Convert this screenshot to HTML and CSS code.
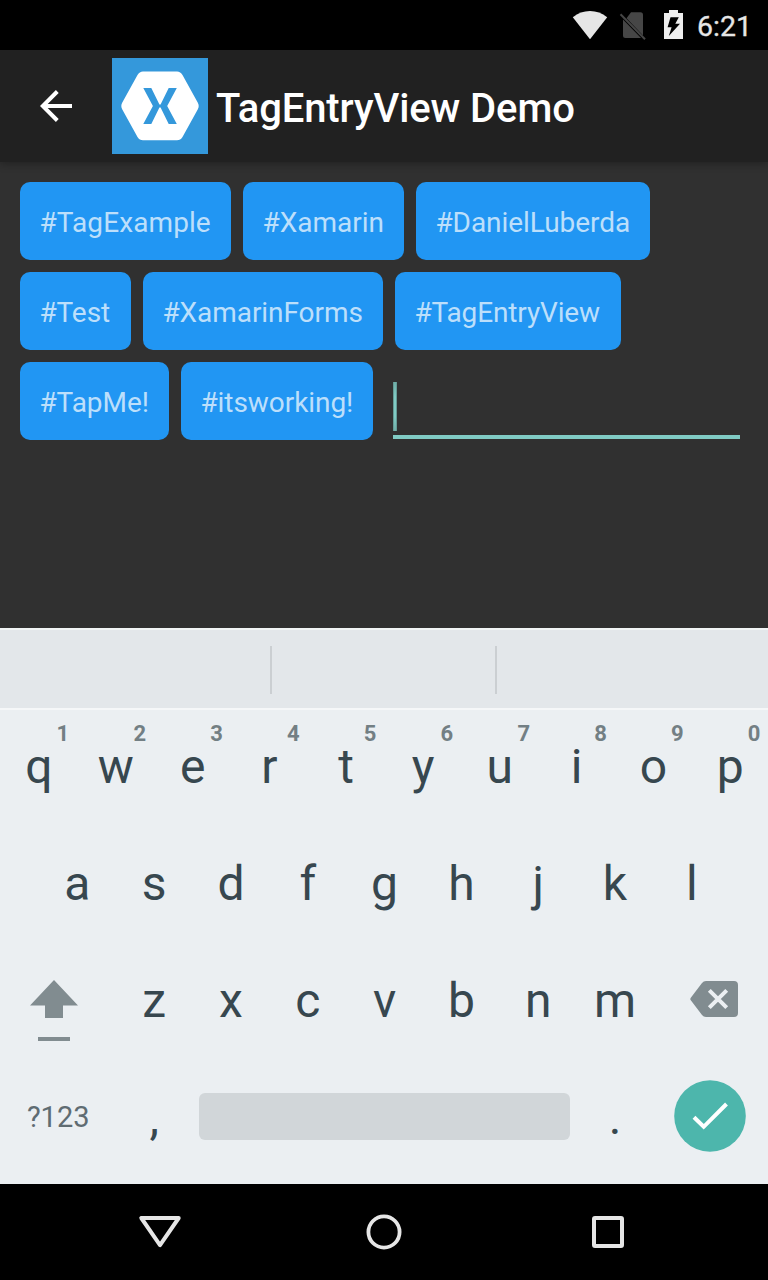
FILE: index.html
```html
<!DOCTYPE html>
<html lang="en">
<head>
<meta charset="utf-8">
<title>TagEntryView Demo</title>
<link rel="stylesheet" href="styles.css">
</head>
<body>
<div class="phone">
  <header class="status">
    <svg class="status-icons" width="128" height="50" viewBox="568 0 128 50">
      <path fill="#e6e6e6" d="M572.8 17.2Q580.500 11 590 11T607.200 17.200L590 39.200Z"/>
      <path fill="#464646" d="M631 12.300H640.500Q643 12.300 643 14.800V35.500L626.500 18.200ZM623 19.500L641 38H625.500Q623 38 623 35.500Z"/>
      <path stroke="#464646" stroke-width="2" d="M620.500 14.300L645 39.200"/>
      <path fill="#eee" d="M664 13H669V10H678V13H683V39H664Z"/>
      <path fill="#000" d="M670.500 17.300H678.800L675.300 23.700H680L668.800 36L671.600 27.200H667.600Z"/>
    </svg>
    <span class="clock">6:21</span>
  </header>

  <div class="appbar">
    <svg class="back" width="32" height="32" viewBox="0 0 32 32">
      <path fill="none" stroke="#fff" stroke-width="4" d="M32 16H3M17.300 1.500L2.800 16L17.300 30.500"/>
    </svg>
    <svg class="logo" width="96" height="96" viewBox="0 0 96 96">
      <rect width="96" height="96" fill="#3498db"/>
      <path fill="#fff" d="M31 13.500H65Q68.500 13.500 70.500 17L85.700 44.500Q87.700 48 85.700 51.500L70.500 79Q68.500 82.300 65 82.300H31Q27.500 82.300 25.500 79L10.300 51.500Q8.300 48 10.300 44.500L25.500 17Q27.500 13.500 31 13.500Z"/>
      <path fill="#3498db" d="M31.300 30H39.300L47.300 46.300Q48 47.200 48.700 46.300L56.700 30H64.800L55.200 48L64.800 66H56.700L48.700 49.700Q48 48.800 47.300 49.700L39.300 66H31.300L40.900 48Z"/>
    </svg>
    <h1 class="title">TagEntryView Demo</h1>
  </div>

  <main class="content">
    <span class="tag tag-example">#TagExample</span>
    <span class="tag tag-xamarin">#Xamarin</span>
    <span class="tag tag-author">#DanielLuberda</span>
    <span class="tag tag-test">#Test</span>
    <span class="tag tag-forms">#XamarinForms</span>
    <span class="tag tag-view">#TagEntryView</span>
    <span class="tag tag-tap">#TapMe!</span>
    <span class="tag tag-working">#itsworking!</span>
    <div class="entry"><i class="caret"></i></div>
  </main>

  <section class="keyboard">
    <div class="suggestions"><i></i><i></i></div>
    <div class="keys">
      <div class="row">
        <span class="key">q<b>1</b></span><span class="key">w<b>2</b></span><span class="key">e<b>3</b></span><span class="key">r<b>4</b></span><span class="key">t<b>5</b></span><span class="key">y<b>6</b></span><span class="key">u<b>7</b></span><span class="key">i<b>8</b></span><span class="key">o<b>9</b></span><span class="key">p<b>0</b></span>
      </div>
      <div class="row">
        <span class="key">a</span><span class="key">s</span><span class="key">d</span><span class="key">f</span><span class="key">g</span><span class="key">h</span><span class="key">j</span><span class="key">k</span><span class="key">l</span>
      </div>
      <div class="row">
        <span class="key wide shift">
          <svg width="48" height="64" viewBox="0 0 48 64"><path fill="#818c90" d="M24 2L48 27.500H33V40H15V27.500H0ZM8 59H40V63H8Z"/></svg>
        </span>
        <span class="key">z</span><span class="key">x</span><span class="key">c</span><span class="key">v</span><span class="key">b</span><span class="key">n</span><span class="key">m</span>
        <span class="key wide backspace">
          <svg width="48" height="36" viewBox="0 0 48 36"><path fill="#818c90" d="M16 0H44Q48 0 48 4V32Q48 36 44 36H16Q13.500 36 12 34L.800 19.300Q-.200 18 .800 16.700L12 2Q13.500 0 16 0Z"/><path stroke="#ebeff2" stroke-width="4" d="M19.300 9.300L36.700 26.700M36.700 9.300L19.300 26.700"/></svg>
        </span>
      </div>
      <div class="row">
        <span class="key wide symbols">?123</span>
        <span class="key">,</span>
        <span class="space"></span>
        <span class="key">.</span>
        <span class="key wide enter">
          <svg width="72" height="72" viewBox="0 0 72 72"><circle cx="36" cy="36" r="35.800" fill="#4db6ac"/><path fill="none" stroke="#fff" stroke-width="4" d="M20 37.300L29.700 46.800L52.500 24"/></svg>
        </span>
      </div>
    </div>
  </section>

  <nav class="navbar">
    <svg width="44" height="40" viewBox="0 0 44 40"><path fill="none" stroke="#e6e6e6" stroke-width="4" stroke-linejoin="round" d="M3.300 6H40.700L22 33.200Z"/></svg>
    <svg width="44" height="40" viewBox="0 0 44 40"><circle cx="22" cy="20" r="15.600" fill="none" stroke="#e6e6e6" stroke-width="3.800"/></svg>
    <svg width="44" height="40" viewBox="0 0 44 40"><rect x="8" y="6" width="28" height="28" rx="1" fill="none" stroke="#e6e6e6" stroke-width="4"/></svg>
  </nav>
</div>
</body>
</html>
```

FILE: styles.css
```css
* {
  box-sizing: border-box;
}

body {
  margin: 0;
  background: #000;
  font-family: Roboto, "Liberation Sans", sans-serif;
}

svg {
  display: block;
  flex: none;
}

.phone {
  display: flex;
  flex-direction: column;
  width: 768px;
  height: 1280px;
  overflow: hidden;
  background: #303030;
}

.status {
  display: flex;
  justify-content: flex-end;
  align-items: center;
  height: 50px;
  background: #000;
}

.clock {
  width: 72px;
  padding: 3px 0 0 1px;
  font-size: 28.5px;
  line-height: 33px;
  font-weight: 400;
  -webkit-text-stroke: 0.3px #e6e6e6;
  color: #e6e6e6;
}

.appbar {
  display: flex;
  align-items: center;
  height: 112px;
  padding-left: 40px;
  background: #212121;
  box-shadow: 0 2px 8px rgba(0, 0, 0, 0.3);
}

.logo {
  margin: 0 8px 0 40px;
}

.title {
  margin: 0;
  padding-top: 5px;
  font-size: 40px;
  line-height: 47px;
  font-weight: 500;
  letter-spacing: -0.1px;
  color: #fff;
}

.content {
  display: flex;
  flex-wrap: wrap;
  align-content: flex-start;
  gap: 12px;
  height: 466px;
  padding: 20px 28px 0 20px;
}

.tag {
  height: 78px;
  padding-left: 19.4px;
  border-radius: 10px;
  background: #2196f3;
  color: #bcdffb;
  font-size: 28px;
  line-height: 81px;
  letter-spacing: -0.06px;
  white-space: nowrap;
}

.tag-example {
  width: 211px;
  letter-spacing: 0.1px;
}

.tag-xamarin {
  width: 161px;
  letter-spacing: 0;
}

.tag-author {
  width: 234px;
}

.tag-test {
  width: 111px;
}

.tag-forms {
  width: 240px;
}

.tag-view {
  width: 226px;
  letter-spacing: -0.14px;
}

.tag-tap {
  width: 149px;
}

.tag-working {
  width: 192px;
}

.entry {
  flex: 1;
  height: 77px;
  margin-left: 8px;
  padding-top: 20px;
  border-bottom: 4px solid #80cbc4;
}

.caret {
  display: block;
  width: 4px;
  height: 49px;
  border: solid #659b96;
  border-width: 0 1px;
  background: linear-gradient(#6fada7, #80cbc4 30%, #80cbc4 70%, #6fada7);
}

.keyboard {
  height: 556px;
  background: #ebeff2;
}

.suggestions {
  display: flex;
  height: 80px;
  padding: 16px 0 0 270px;
  gap: 223px;
  border-top: 2px solid #f1f4f5;
  background: #e3e7ea;
}

.suggestions i {
  width: 2px;
  height: 48px;
  background: #cbcfd2;
}

.keys {
  box-shadow: inset 0 2px #f5f7f8;
}

.row {
  display: flex;
  justify-content: center;
  height: 117px;
}

.key {
  position: relative;
  width: 76.8px;
  padding-left: 1.2px;
  text-align: center;
  font-size: 48px;
  line-height: 117px;
  color: #37474f;
}

.key b {
  position: absolute;
  top: 12px;
  right: 7.6px;
  font-size: 22px;
  line-height: 27px;
  color: #737f84;
}

.wide {
  display: flex;
  justify-content: center;
  width: 115.2px;
}

.shift {
  justify-content: flex-start;
  padding: 36px 0 0 30px;
}

.backspace {
  justify-content: flex-end;
  padding: 39px 30px 0 0;
}

.symbols {
  font-size: 29px;
  color: #5f6c72;
}

.space {
  width: 371px;
  height: 47px;
  margin: 34px 6px 0 7px;
  border-radius: 6px;
  background: #d1d6d9;
}

.enter {
  padding: 21px 0 0;
}

.navbar {
  display: flex;
  justify-content: center;
  align-items: center;
  gap: 180px;
  height: 96px;
  background: #000;
}
```
